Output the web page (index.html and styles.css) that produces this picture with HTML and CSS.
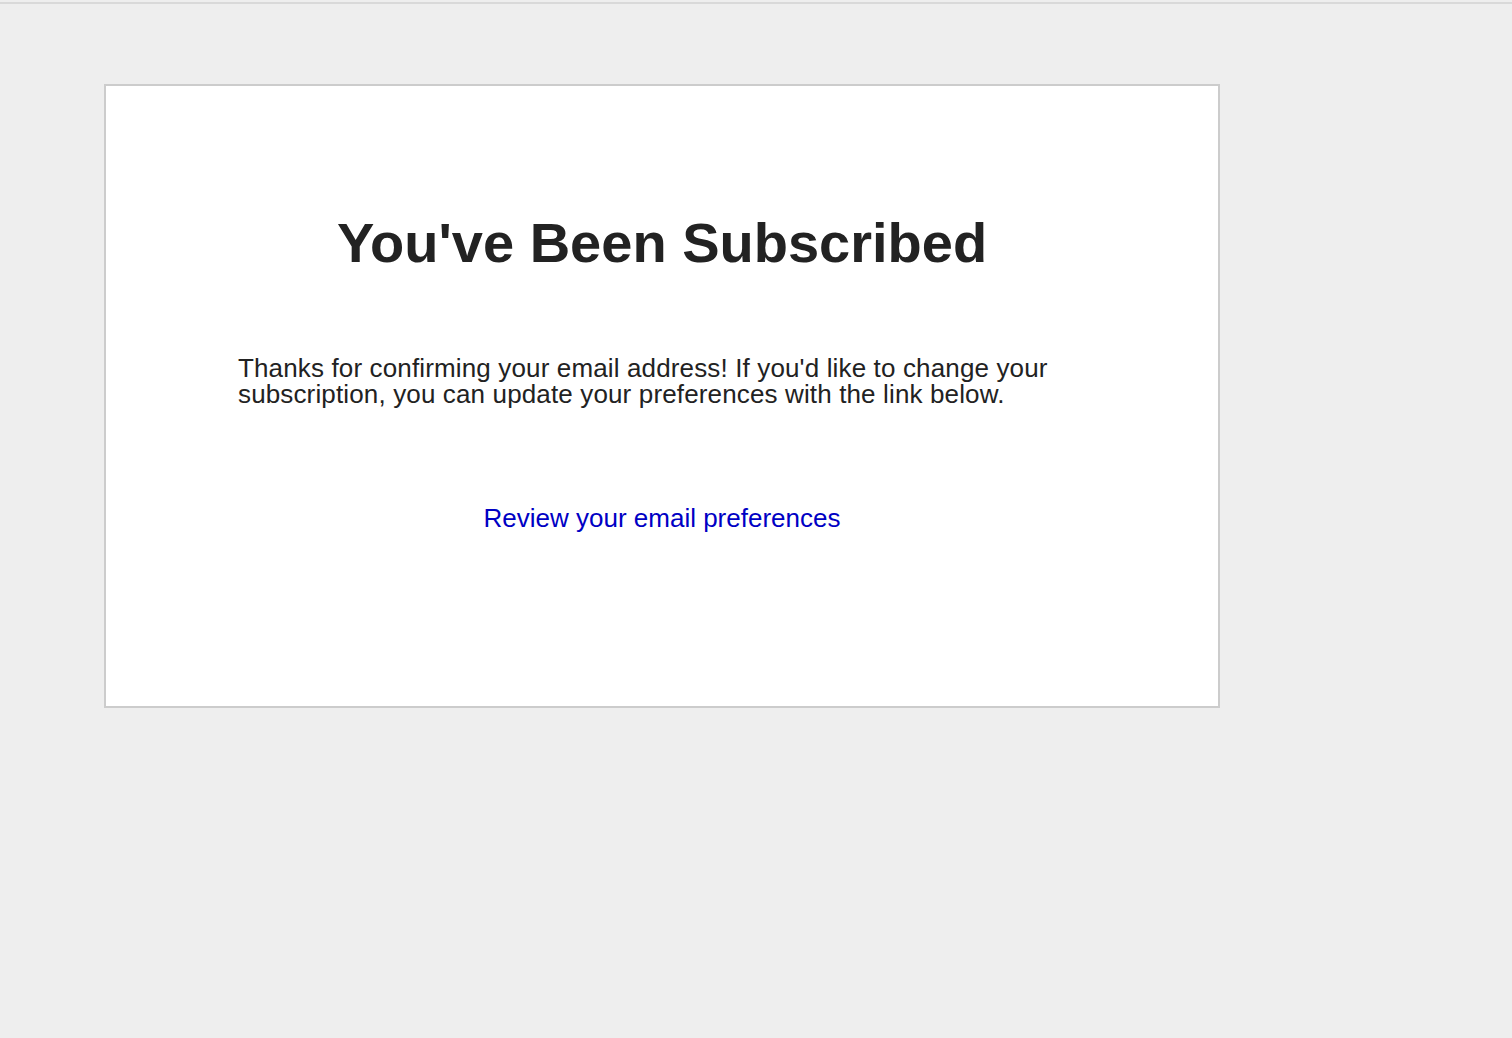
FILE: index.html
```html
<!DOCTYPE html>
<html lang="en-US">
<head>
    <meta charset="utf-8">
    <title>You've Been Subscribed</title>
    <link rel="stylesheet" href="styles.css">
</head>
<body>
    <div class="page">
        <section class="card">
            <h1>You've Been Subscribed</h1>
            <p class="message">Thanks for confirming your email address! If you'd like to change your subscription, you can update your preferences with the link below.</p>
            <div class="action">
                <a href="#">Review your email preferences</a>
            </div>
        </section>
    </div>
</body>
</html>
```

FILE: styles.css
```css
html, body {
    margin: 0;
    padding: 0;
    background-color: #eeeeee;
}
body {
    font: 26px "Liberation Sans", Arial, sans-serif;
    line-height: 26px;
    color: #222222;
    padding-top: 2px;
}
.page {
    border-top: 2px solid #d9d9d9;
    padding: 80px 0 0 104px;
    min-height: 950px;
}
.card {
    box-sizing: border-box;
    width: 1116px;
    height: 624px;
    background-color: #ffffff;
    border: 2px solid #cccccc;
    padding: 123px 132px 0 132px;
}
h1 {
    margin: 0;
    font-size: 56px;
    font-weight: bold;
    text-align: center;
    line-height: 68px;
    color: #222222;
}
.message {
    margin: 78px 0 0 0;
    letter-spacing: 0.14px;
}
.action {
    margin-top: 98px;
    text-align: center;
}
.action a {
    color: #0000c4;
    text-decoration: none;
}
```
